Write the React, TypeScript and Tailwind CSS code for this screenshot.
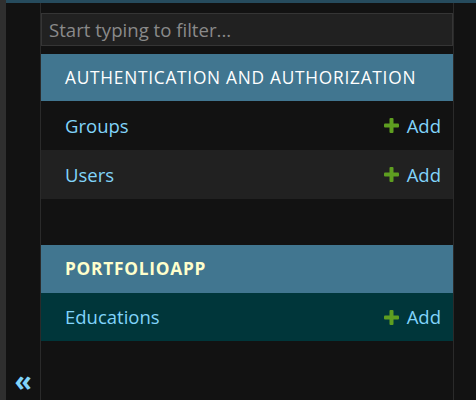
import React from "react";

const font = { fontFamily: '"Open Sans", "Noto Sans", sans-serif' };

function Plus() {
  return (
    <svg width="15" height="15" viewBox="0 0 15 15" className="shrink-0">
      <rect x="5.5" y="0" width="4" height="15" rx="1" fill="#5e9e20" />
      <rect x="0" y="5.5" width="15" height="4" rx="1" fill="#5e9e20" />
    </svg>
  );
}

function Row({ name, bg, h }: { name: string; bg: string; h: string }) {
  return (
    <div className={`flex items-center justify-between pl-[24px] pr-[12px] ${bg} ${h}`}>
      <span className="text-[18.5px] text-[#81d4fa]">{name}</span>
      <span className="flex items-center gap-[8px] text-[18.5px] text-[#81d4fa]">
        <Plus />
        Add
      </span>
    </div>
  );
}

export default function App() {
  return (
    <div className="w-[476px] h-[400px] flex bg-[#121212] overflow-hidden" style={font}>
      <div className="w-[6px] shrink-0 bg-[#2f2f2f]" />
      <div className="flex-1 flex flex-col">
        <div className="h-[3px] bg-[#264b5d]" />
        <div className="flex flex-1">
          <div className="w-[35px] shrink-0 border-r border-[#2a2a2a] flex flex-col justify-end items-center pb-[6px]">
            <span className="text-[28px] leading-[28px] font-bold text-[#81d4fa]">«</span>
          </div>
          <nav className="w-[413px] shrink-0 border-r border-[#2a2a2a] flex flex-col">
            <div className="mt-[10px] mb-[8px] h-[33px] border border-[#353535] bg-[#212121] flex items-center pl-[7px]">
              <span className="text-[18.6px] text-[#8a8a8a]">Start typing to filter...</span>
            </div>
            <div className="h-[47px] bg-[#417690] flex items-center pl-[24px]">
              <span className="text-[17.3px] tracking-[0.75px] text-white">AUTHENTICATION AND AUTHORIZATION</span>
            </div>
            <Row name="Groups" bg="bg-[#121212]" h="h-[49px]" />
            <Row name="Users" bg="bg-[#212121]" h="h-[49px]" />
            <div className="h-[46px]" />
            <div className="h-[48px] bg-[#417690] flex items-center pl-[24px]">
              <span className="text-[17.3px] tracking-[0.75px] font-bold text-[#ffffcc]">PORTFOLIOAPP</span>
            </div>
            <Row name="Educations" bg="bg-[#00363a]" h="h-[48px]" />
          </nav>
          <div className="flex-1" />
        </div>
      </div>
    </div>
  );
}
